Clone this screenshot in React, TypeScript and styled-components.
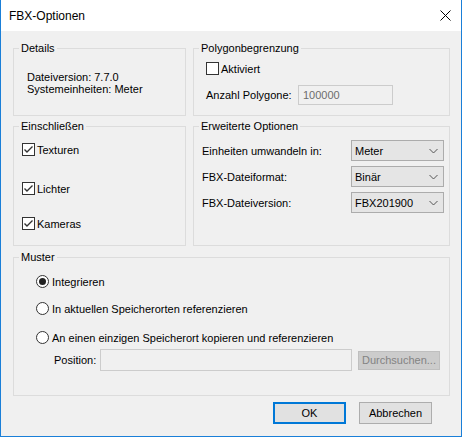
import React from 'react';
import styled, { createGlobalStyle } from 'styled-components';

const GlobalStyle = createGlobalStyle`
    html, body {
        margin: 0;
        padding: 0;
        background: #f0f0f0;
    }
    * {
        box-sizing: border-box;
    }
`;

const Window = styled.div`
    width: 462px;
    height: 437px;
    background: #f0f0f0;
    border: 1px solid #1a7fd8;
    border-top: none;
    display: flex;
    flex-direction: column;
    font-family: 'Liberation Sans', Arial, sans-serif;
    font-size: 11px;
    color: #000;
    overflow: hidden;
`;

const TitleBar = styled.div`
    height: 31px;
    flex: none;
    background: #fff;
    display: flex;
    align-items: center;
    justify-content: space-between;
    padding: 0 10px 0 8px;
    font-size: 12px;
`;

const Body = styled.div`
    display: grid;
    grid-template-columns: 173px 257px;
    grid-template-rows: 74px 126px 146px;
    column-gap: 7px;
    row-gap: 4px;
    padding: 11px 11px 0 12px;
`;

const Group = styled.fieldset<{ $wide?: boolean; $mt?: number }>`
    margin: ${(p) => p.$mt || 0}px 0 0 0;
    padding: 0;
    border: 1px solid #dcdcdc;
    min-width: 0;
    grid-column: ${(p) => (p.$wide ? '1 / -1' : 'auto')};
`;

const Legend = styled.legend`
    padding: 0 2px;
    margin-left: 5px;
    line-height: 13px;
    font-size: 11px;
`;

const GroupBody = styled.div<{ $pad: string }>`
    padding: ${(p) => p.$pad};
`;

const InfoText = styled.div`
    line-height: 12px;
    white-space: nowrap;
`;

const Row = styled.div<{ $mt?: number }>`
    display: flex;
    align-items: center;
    height: 13px;
    margin-top: ${(p) => p.$mt || 0}px;
    white-space: nowrap;
`;

const Box = styled.span`
    width: 13px;
    height: 13px;
    flex: none;
    border: 1px solid #333;
    background: #fff;
    margin-right: 2px;
    display: flex;
    align-items: center;
    justify-content: center;
`;

const Circle = styled.span`
    width: 13px;
    height: 13px;
    flex: none;
    border: 1px solid #333;
    border-radius: 50%;
    background: #fff;
    margin-right: 3px;
    display: flex;
    align-items: center;
    justify-content: center;
`;

const Dot = styled.span`
    width: 7px;
    height: 7px;
    border-radius: 50%;
    background: #222;
`;

const FieldRow = styled.div<{ $mt?: number }>`
    display: flex;
    align-items: center;
    margin-top: ${(p) => p.$mt || 0}px;
    white-space: nowrap;
`;

const FieldLabel = styled.span<{ $w: number }>`
    width: ${(p) => p.$w}px;
    flex: none;
`;

const TextBox = styled.div<{ $w: number; $h: number }>`
    width: ${(p) => p.$w}px;
    height: ${(p) => p.$h}px;
    border: 1px solid #cccccc;
    background: #f0f0f0;
    color: #6d6d6d;
    padding-left: 4px;
    display: flex;
    align-items: center;
`;

const OptionsGrid = styled.div`
    display: grid;
    grid-template-columns: 149px 93px;
    grid-auto-rows: 21px;
    row-gap: 5px;
    align-items: center;
    white-space: nowrap;
`;

const Select = styled.div`
    height: 21px;
    border: 1px solid #acacac;
    background: #e5e5e5;
    display: flex;
    align-items: center;
    justify-content: space-between;
    padding: 0 5px 0 3px;
`;

const Button = styled.div<{ $default?: boolean; $disabled?: boolean; $w: number; $h: number }>`
    width: ${(p) => p.$w}px;
    height: ${(p) => p.$h}px;
    flex: none;
    display: flex;
    align-items: center;
    justify-content: center;
    background: ${(p) => (p.$disabled ? '#cccccc' : '#e1e1e1')};
    color: ${(p) => (p.$disabled ? '#838383' : '#000')};
    border: ${(p) => (p.$default ? '2px solid #0078d7' : p.$disabled ? '1px solid #bfbfbf' : '1px solid #adadad')};
    white-space: nowrap;
`;

const Footer = styled.div`
    display: flex;
    justify-content: flex-end;
    gap: 13px;
    padding: 6px 29px 0 0;
`;

function CloseIcon() {
    return (
        <svg width="11" height="11" viewBox="0 0 11 11">
            <path d="M0.5 0.5 L10.5 10.5 M10.5 0.5 L0.5 10.5" stroke="#000" strokeWidth="1" />
        </svg>
    );
}

function Check() {
    return (
        <svg width="11" height="11" viewBox="0 0 11 11">
            <path d="M1.5 5.5 L4 8 L9.5 2.5" stroke="#333" strokeWidth="1.4" fill="none" />
        </svg>
    );
}

function Chevron() {
    return (
        <svg width="9" height="6" viewBox="0 0 9 6">
            <path d="M0.5 1 L4.5 5 L8.5 1" stroke="#555" strokeWidth="1" fill="none" />
        </svg>
    );
}

function CheckBox({ label, checked, mt }: { label: string; checked?: boolean; mt?: number }) {
    return (
        <Row $mt={mt}>
            <Box>{checked && <Check />}</Box>
            {label}
        </Row>
    );
}

function Radio({ label, checked, mt }: { label: string; checked?: boolean; mt?: number }) {
    return (
        <Row $mt={mt}>
            <Circle>{checked && <Dot />}</Circle>
            {label}
        </Row>
    );
}

function Dropdown({ value }: { value: string }) {
    return (
        <Select>
            {value}
            <Chevron />
        </Select>
    );
}

export default function App() {
    return (
        <>
            <GlobalStyle />
            <Window>
                <TitleBar>
                    FBX-Optionen
                    <CloseIcon />
                </TitleBar>
                <Body>
                    <Group>
                        <Legend>Details</Legend>
                        <GroupBody $pad="16px 6px 0 13px">
                            <InfoText>Dateiversion: 7.7.0</InfoText>
                            <InfoText>Systemeinheiten: Meter</InfoText>
                        </GroupBody>
                    </Group>
                    <Group>
                        <Legend>Polygonbegrenzung</Legend>
                        <GroupBody $pad="0 6px 0 12px">
                            <CheckBox label="Aktiviert" mt={7} />
                            <FieldRow $mt={10}>
                                <FieldLabel $w={92}>Anzahl Polygone:</FieldLabel>
                                <TextBox $w={95} $h={20}>100000</TextBox>
                            </FieldRow>
                        </GroupBody>
                    </Group>
                    <Group>
                        <Legend>Einschließen</Legend>
                        <GroupBody $pad="0 6px 0 8px">
                            <CheckBox label="Texturen" checked mt={10} />
                            <CheckBox label="Lichter" checked mt={26} />
                            <CheckBox label="Kameras" checked mt={22} />
                        </GroupBody>
                    </Group>
                    <Group>
                        <Legend>Erweiterte Optionen</Legend>
                        <GroupBody $pad="7px 4px 0 8px">
                            <OptionsGrid>
                                <span>Einheiten umwandeln in:</span>
                                <Dropdown value="Meter" />
                                <span>FBX-Dateiformat:</span>
                                <Dropdown value="Binär" />
                                <span>FBX-Dateiversion:</span>
                                <Dropdown value="FBX201900" />
                            </OptionsGrid>
                        </GroupBody>
                    </Group>
                    <Group $wide $mt={1}>
                        <Legend>Muster</Legend>
                        <GroupBody $pad="0 8px 0 22px">
                            <Radio label="Integrieren" checked mt={11} />
                            <Radio label="In aktuellen Speicherorten referenzieren" mt={14} />
                            <Radio label="An einen einzigen Speicherort kopieren und referenzieren" mt={16} />
                            <FieldRow $mt={5}>
                                <FieldLabel $w={18} />
                                <FieldLabel $w={46}>Position:</FieldLabel>
                                <TextBox $w={252} $h={22} />
                                <FieldLabel $w={6} />
                                <Button $disabled $w={82} $h={19}>
                                    Durchsuchen...
                                </Button>
                            </FieldRow>
                        </GroupBody>
                    </Group>
                </Body>
                <Footer>
                    <Button $default $w={73} $h={22}>
                        OK
                    </Button>
                    <Button $w={73} $h={22}>
                        Abbrechen
                    </Button>
                </Footer>
            </Window>
        </>
    );
}
